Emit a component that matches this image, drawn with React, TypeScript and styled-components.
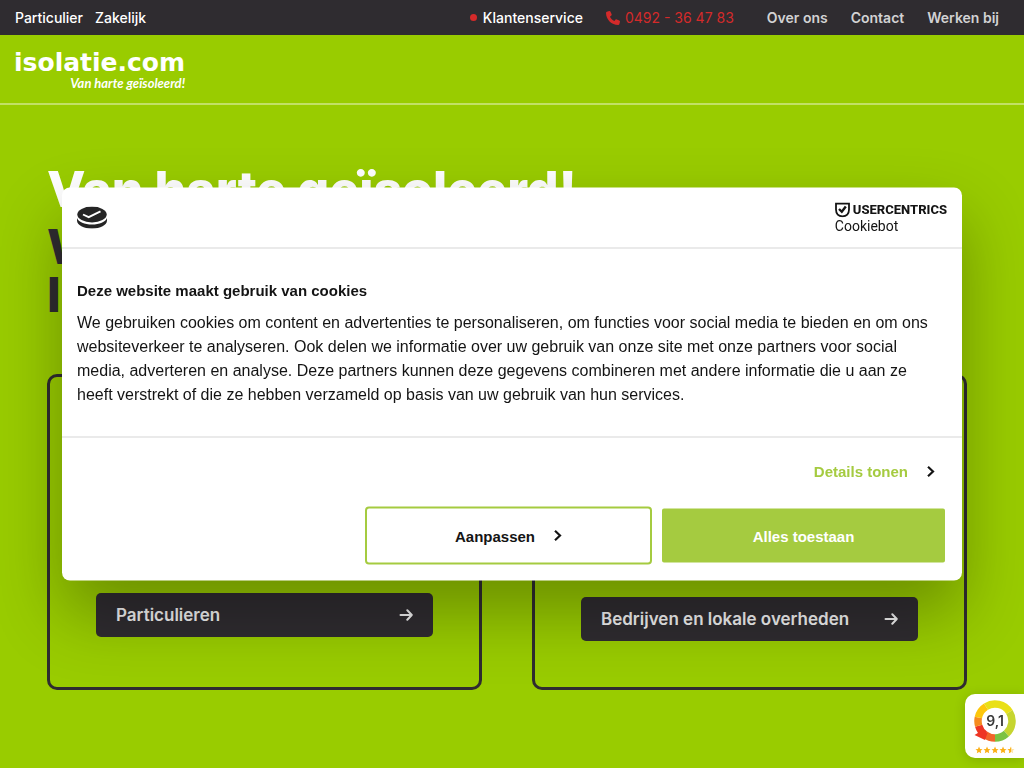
import React from "react";
import styled, { createGlobalStyle } from "styled-components";
import { FaPhone } from "react-icons/fa6";

const GlobalStyle = createGlobalStyle`
  *, *::before, *::after { box-sizing: border-box; }
  body {
    margin: 0;
    background: #99cc00;
    color: #2f2c30;
    font-family: Inter, "Open Sans", sans-serif;
    overflow: hidden;
  }
  h1, h2, p { margin: 0; }
  a { color: inherit; text-decoration: none; }
  button { font: inherit; cursor: pointer; }
  svg { display: block; flex: none; }
`;

const Page = styled.div`
  min-height: 100vh;
`;

const TopBar = styled.nav`
  display: flex;
  align-items: center;
  justify-content: space-between;
  height: 35px;
  padding: 0 25px 0 15px;
  background: #2f2c30;
  color: #ffffff;
  font-size: 14px;
  line-height: 20px;
  white-space: nowrap;
`;

const LinkGroup = styled.div<{ $gap: number }>`
  display: flex;
  align-items: center;
  gap: ${(p) => p.$gap}px;
`;

const TopLink = styled.a`
  font-weight: 500;
`;

const MutedLink = styled.a`
  color: #d2d2d3;
  font-weight: 600;
`;

const ServiceLink = styled(TopLink)`
  display: flex;
  align-items: center;
  gap: 6px;

  &::before {
    content: "";
    width: 7px;
    height: 7px;
    border-radius: 50%;
    background: #d42a2a;
  }
`;

const PhoneLink = styled.a`
  display: flex;
  align-items: center;
  gap: 5px;
  margin-right: 10px;
  color: #d42a2a;
`;

const Header = styled.header`
  display: flex;
  align-items: flex-start;
  height: 70px;
  padding: 14px 15px 0 14px;
  border-bottom: 2px solid rgba(255, 255, 255, 0.4);
`;

const Logo = styled.a`
  display: flex;
  flex-direction: column;
  color: #ffffff;
`;

const LogoName = styled.span`
  font: 700 25px/28px "DejaVu Sans", sans-serif;
`;

const LogoTagline = styled.span`
  align-self: flex-end;
  font: italic 700 13px/12px Lato, sans-serif;
`;

const Hero = styled.main`
  padding: 60px 57px 0 47px;
`;

const HeroTitle = styled.h1`
  color: #ffffff;
  font-size: 50px;
  font-weight: 800;
  line-height: 48px;
  white-space: nowrap;
`;

const HeroSubtitle = styled.h2`
  margin-top: 10px;
  font-size: 48px;
  font-weight: 800;
  line-height: 48px;
`;

const Cards = styled.section`
  display: grid;
  grid-template-columns: 1fr 1fr;
  gap: 50px;
  margin-top: 55px;
`;

const Card = styled.article<{ $bottom: number }>`
  display: flex;
  flex-direction: column;
  justify-content: flex-end;
  min-height: 316px;
  padding: 46px 46px ${(p) => p.$bottom}px;
  border: 3px solid #2f2c30;
  border-radius: 10px;
`;

const CardLink = styled.a`
  display: flex;
  align-items: center;
  justify-content: space-between;
  height: 44px;
  padding: 0 20px;
  border-radius: 5px;
  background: #2f2c30;
  color: #f2f2f2;
  font-size: 17px;
  font-weight: 600;
  line-height: 24px;
`;

const Dialog = styled.div`
  position: fixed;
  top: 50%;
  left: 50%;
  width: calc(100% - 124px);
  max-width: 900px;
  transform: translate(-50%, -50%);
  border-radius: 8px;
  background: #ffffff;
  color: #141414;
  box-shadow: 0 32px 68px rgba(0, 0, 0, 0.3);
  font-family: "Liberation Sans", sans-serif;
`;

const DialogHeader = styled.div`
  display: flex;
  align-items: center;
  justify-content: space-between;
  height: 61px;
  padding: 0 15px;
  border-bottom: 1px solid #d6d6d6;
`;

const Vendor = styled.a`
  display: flex;
  flex-direction: column;
`;

const VendorName = styled.span`
  display: flex;
  align-items: center;
  gap: 3px;
  font: 800 13px/16px Roboto, sans-serif;
`;

const VendorProduct = styled.span`
  font: 400 14px/16px Roboto, sans-serif;
`;

const DialogBody = styled.div`
  padding: 30px 20px 30px 15px;
  border-bottom: 1px solid #d6d6d6;
  font-size: 16px;
  line-height: 24px;
`;

const DialogTitle = styled.h2`
  margin-bottom: 8px;
  font-size: 15px;
  font-weight: 700;
  line-height: 24px;
`;

const DialogFooter = styled.div`
  display: flex;
  flex-direction: column;
  padding: 22px 17px 16px;
  font-size: 15px;
  font-weight: 700;
`;

const DetailsLink = styled.a`
  display: flex;
  align-items: center;
  align-self: flex-end;
  gap: 18px;
  margin-right: 10px;
  color: #a5cb40;
  line-height: 24px;

  svg { color: #141414; }
`;

const Actions = styled.div`
  display: grid;
  grid-template-columns: 287px 283px;
  align-items: center;
  justify-content: end;
  gap: 10px;
  margin-top: 23px;
`;

const ActionButton = styled.button<{ $primary?: boolean }>`
  display: flex;
  align-items: center;
  justify-content: center;
  gap: 18px;
  height: ${(p) => (p.$primary ? 54 : 58)}px;
  border: 2px solid #a5cb40;
  border-radius: ${(p) => (p.$primary ? 2 : 4)}px;
  background: ${(p) => (p.$primary ? "#a5cb40" : "#ffffff")};
  color: ${(p) => (p.$primary ? "#ffffff" : "#141414")};
`;

const Rating = styled.aside`
  position: fixed;
  right: 0;
  bottom: 10px;
  display: flex;
  flex-direction: column;
  align-items: center;
  gap: 4px;
  width: 59px;
  height: 64px;
  padding-top: 6px;
  border-radius: 10px 0 0 10px;
  background: #ffffff;
  box-shadow: 0 2px 12px rgba(0, 0, 0, 0.15);
`;

const Score = styled.text`
  font: 600 14px Inter, sans-serif;
  fill: #3a3a3a;
`;

const Chevron = () => (
  <svg width="9" height="12" viewBox="0 0 9 12" fill="none" stroke="currentColor" strokeWidth="2.2" aria-hidden="true">
    <path d="M2 1.300 7 6 2 10.700" />
  </svg>
);

const Arrow = () => (
  <svg width="14" height="12" viewBox="0 0 14 12" fill="none" stroke="currentColor" strokeWidth="2" strokeLinecap="round" strokeLinejoin="round" aria-hidden="true">
    <path d="M1.500 6H12.800M8.300 1.300 12.800 6 8.300 10.700" />
  </svg>
);

const CookieIcon = () => (
  <svg width="30" height="22" viewBox="0 0 30 22" aria-hidden="true">
    <path fill="#252525" d="M0 11.5C1.5 15.5 7.5 18 15 18s13.500-2.500 15-6.500V14c0 4.600-6.700 8.200-15 8.200S0 18.600 0 14z" />
    <ellipse cx="15" cy="8" rx="14.700" ry="7.900" fill="#252525" />
    <path d="M6 8 11.700 10.700 23.500 4.800" fill="none" stroke="#fff" strokeWidth="1.900" />
  </svg>
);

const ShieldIcon = () => (
  <svg width="15" height="15" viewBox="0 0 15 15" fill="none" stroke="#141414" aria-hidden="true">
    <path d="M1 1H14V7C14 11.500 11.500 13.800 7.500 13.800S1 11.500 1 7Z" strokeWidth="1.800" />
    <path d="M4 6.500 6.800 9.300 10.800 4" strokeWidth="2.400" />
  </svg>
);

const ringSegments = [
  { color: "#e9e018", from: -32, to: 58 },
  { color: "#c6d530", from: 58, to: 138 },
  { color: "#7bc242", from: 138, to: 180 },
  { color: "#f1642a", from: 180, to: 217 },
  { color: "#ee3524", from: 217, to: 254 },
  { color: "#f68b1f", from: 254, to: 282 },
  { color: "#fdc70c", from: 282, to: 328 },
];

const point = (degrees: number) => {
  const angle = (degrees * Math.PI) / 180;
  return `${21 + 17 * Math.sin(angle)} ${21 - 17 * Math.cos(angle)}`;
};

const RatingRing = () => (
  <svg width="42" height="42" viewBox="0 0 42 42" role="img" aria-label="Beoordeling 9,1">
    {ringSegments.map((s) => (
      <path key={s.color} d={`M${point(s.from)}A17 17 0 0 1 ${point(s.to)}`} fill="none" stroke={s.color} strokeWidth="7.500" />
    ))}
    <path d="M0.500 35 5.500 32 4 27.500 13.500 33 11 40Z" fill="#ee3524" />
    <Score x="21" y="26" textAnchor="middle">9,1</Score>
  </svg>
);

const starPath = "M4 0 5.200 2.700 8 3 5.900 4.900 6.500 7.700 4 6.300 1.500 7.700 2.100 4.900 0 3 2.800 2.700Z";

const Stars = () => (
  <svg width="40" height="8" viewBox="0 0 40 8" aria-hidden="true">
    {[0, 1, 2, 3].map((i) => (
      <path key={i} d={starPath} fill="#fbb017" transform={`translate(${i * 8 + 0.5} .5) scale(.88)`} />
    ))}
    <g transform="translate(32.500 .5) scale(.88)">
      <path d={starPath} fill="#fde2a5" />
      <path d="M4 0V6.300L1.500 7.700 2.100 4.900 0 3 2.800 2.700Z" fill="#fbb017" />
    </g>
  </svg>
);

export default function App() {
  return (
    <Page>
      <GlobalStyle />
      <TopBar>
        <LinkGroup $gap={12}>
          <TopLink href="#">Particulier</TopLink>
          <TopLink href="#">Zakelijk</TopLink>
        </LinkGroup>
        <LinkGroup $gap={23}>
          <ServiceLink href="#">Klantenservice</ServiceLink>
          <PhoneLink href="tel:0492364783">
            <FaPhone size={14} />
            0492 - 36 47 83
          </PhoneLink>
          <MutedLink href="#">Over ons</MutedLink>
          <MutedLink href="#">Contact</MutedLink>
          <MutedLink href="#">Werken bij</MutedLink>
        </LinkGroup>
      </TopBar>
      <Header>
        <Logo href="#">
          <LogoName>isolatie.com</LogoName>
          <LogoTagline>Van harte geïsoleerd!</LogoTagline>
        </Logo>
      </Header>
      <Hero>
        <HeroTitle>Van harte geïsoleerd!</HeroTitle>
        <HeroSubtitle>
          W
          <br />
          I
        </HeroSubtitle>
        <Cards>
          <Card $bottom={50}>
            <CardLink href="#">
              Particulieren
              <Arrow />
            </CardLink>
          </Card>
          <Card $bottom={46}>
            <CardLink href="#">
              Bedrijven en lokale overheden
              <Arrow />
            </CardLink>
          </Card>
        </Cards>
      </Hero>
      <Dialog role="dialog" aria-labelledby="cookie-title">
        <DialogHeader>
          <CookieIcon />
          <Vendor href="#">
            <VendorName>
              <ShieldIcon />
              USERCENTRICS
            </VendorName>
            <VendorProduct>Cookiebot</VendorProduct>
          </Vendor>
        </DialogHeader>
        <DialogBody>
          <DialogTitle id="cookie-title">Deze website maakt gebruik van cookies</DialogTitle>
          <p>
            We gebruiken cookies om content en advertenties te personaliseren, om functies voor social media te bieden en om ons
            websiteverkeer te analyseren. Ook delen we informatie over uw gebruik van onze site met onze partners voor social
            media, adverteren en analyse. Deze partners kunnen deze gegevens combineren met andere informatie die u aan ze
            heeft verstrekt of die ze hebben verzameld op basis van uw gebruik van hun services.
          </p>
        </DialogBody>
        <DialogFooter>
          <DetailsLink href="#">
            Details tonen
            <Chevron />
          </DetailsLink>
          <Actions>
            <ActionButton type="button">
              Aanpassen
              <Chevron />
            </ActionButton>
            <ActionButton type="button" $primary>
              Alles toestaan
            </ActionButton>
          </Actions>
        </DialogFooter>
      </Dialog>
      <Rating>
        <RatingRing />
        <Stars />
      </Rating>
    </Page>
  );
}
